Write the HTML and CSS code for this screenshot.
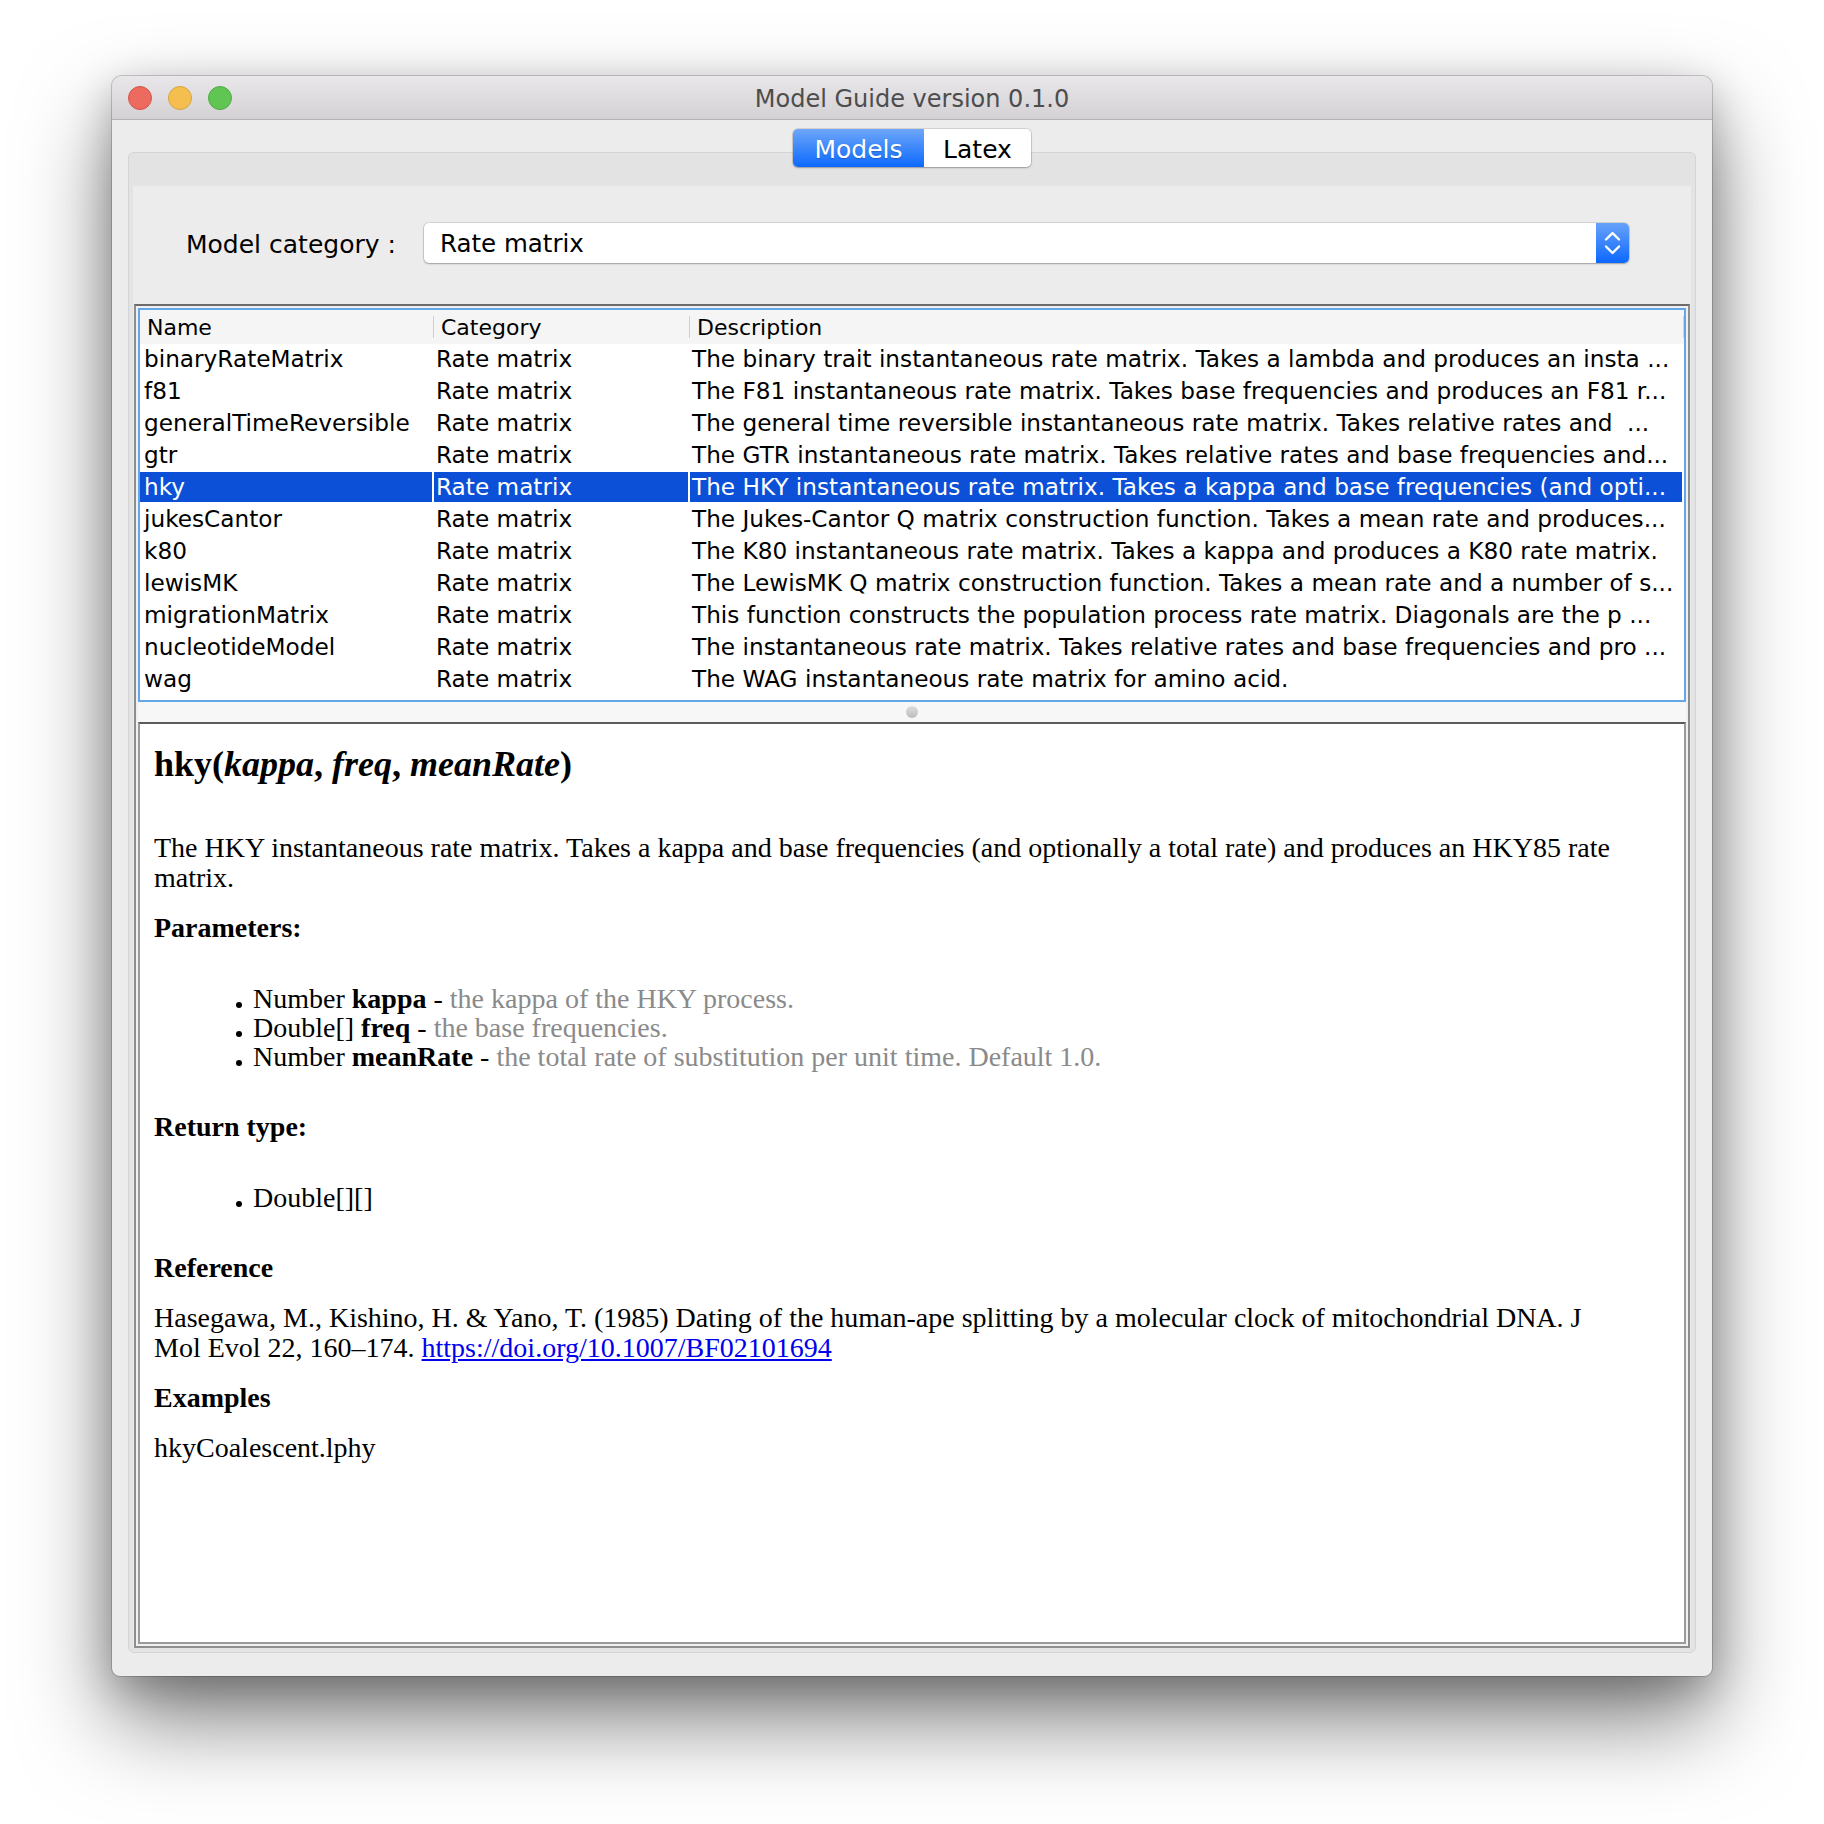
FILE: index.html
```html
<!DOCTYPE html>
<html lang="en">
<head>
    <meta charset="UTF-8">
    <title>Model Guide version 0.1.0</title>
    <link rel="stylesheet" href="styles.css">
</head>
<body>

    <div class="window">
        <div class="titlebar">
            <div class="lights">
                <span class="light red"></span>
                <span class="light yellow"></span>
                <span class="light green"></span>
            </div>
            <div class="title">Model Guide version 0.1.0</div>
        </div>

        <div class="window-body">
            <div class="tabs">
                <span class="tab active">Models</span>
                <span class="tab">Latex</span>
            </div>

            <div class="tab-panel">
                <div class="tab-content">
                    <div class="category-row">
                        <label class="category-label">Model category :</label>
                        <div class="combo">
                            <span class="combo-value">Rate matrix</span>
                            <span class="combo-arrows">
                                <svg width="33" height="40" viewBox="0 0 33 40">
                                    <path d="M10 16.5 L16.5 10 L23 16.5" fill="none" stroke="#fff" stroke-width="2.4" stroke-linecap="round" stroke-linejoin="round"/>
                                    <path d="M10 23.5 L16.5 30 L23 23.5" fill="none" stroke="#fff" stroke-width="2.4" stroke-linecap="round" stroke-linejoin="round"/>
                                </svg>
                            </span>
                        </div>
                    </div>

                    <div class="split">
                        <div class="table-scroll">
                            <table class="models">
                                <colgroup>
                                    <col class="col-name">
                                    <col class="col-category">
                                    <col>
                                </colgroup>
                                <thead>
                                    <tr><th>Name</th><th>Category</th><th>Description</th></tr>
                                </thead>
                                <tbody>
                                    <tr><td>binaryRateMatrix</td><td>Rate matrix</td><td>The binary trait instantaneous rate matrix. Takes a lambda and produces an insta ...</td></tr>
                                    <tr><td>f81</td><td>Rate matrix</td><td>The F81 instantaneous rate matrix. Takes base frequencies and produces an F81 r...</td></tr>
                                    <tr><td>generalTimeReversible</td><td>Rate matrix</td><td>The general time reversible instantaneous rate matrix. Takes relative rates and  ...</td></tr>
                                    <tr><td>gtr</td><td>Rate matrix</td><td>The GTR instantaneous rate matrix. Takes relative rates and base frequencies and...</td></tr>
                                    <tr class="selected"><td>hky</td><td>Rate matrix</td><td>The HKY instantaneous rate matrix. Takes a kappa and base frequencies (and opti...</td></tr>
                                    <tr><td>jukesCantor</td><td>Rate matrix</td><td>The Jukes-Cantor Q matrix construction function. Takes a mean rate and produces...</td></tr>
                                    <tr><td>k80</td><td>Rate matrix</td><td>The K80 instantaneous rate matrix. Takes a kappa and produces a K80 rate matrix.</td></tr>
                                    <tr><td>lewisMK</td><td>Rate matrix</td><td>The LewisMK Q matrix construction function. Takes a mean rate and a number of s...</td></tr>
                                    <tr><td>migrationMatrix</td><td>Rate matrix</td><td>This function constructs the population process rate matrix. Diagonals are the p ...</td></tr>
                                    <tr><td>nucleotideModel</td><td>Rate matrix</td><td>The instantaneous rate matrix. Takes relative rates and base frequencies and pro ...</td></tr>
                                    <tr><td>wag</td><td>Rate matrix</td><td>The WAG instantaneous rate matrix for amino acid.</td></tr>
                                </tbody>
                            </table>
                        </div>

                        <div class="divider"><span class="grip"></span></div>

                        <div class="doc-pane">
                            <h2 class="signature">hky(<i>kappa</i>, <i>freq</i>, <i>meanRate</i>)</h2>
                            <p>The HKY instantaneous rate matrix. Takes a kappa and base frequencies (and optionally a total rate) and produces an HKY85 rate<br>matrix.</p>

                            <h3>Parameters:</h3>
                            <ul>
                                <li>Number <b>kappa</b> - <span class="desc">the kappa of the HKY process.</span></li>
                                <li>Double[] <b>freq</b> - <span class="desc">the base frequencies.</span></li>
                                <li>Number <b>meanRate</b> - <span class="desc">the total rate of substitution per unit time. Default 1.0.</span></li>
                            </ul>

                            <h3>Return type:</h3>
                            <ul>
                                <li>Double[][]</li>
                            </ul>

                            <h3>Reference</h3>
                            <p>Hasegawa, M., Kishino, H. &amp; Yano, T. (1985) Dating of the human-ape splitting by a molecular clock of mitochondrial DNA. J<br>Mol Evol 22, 160–174. <a href="#">https://doi.org/10.1007/BF02101694</a></p>

                            <h3>Examples</h3>
                            <p>hkyCoalescent.lphy</p>
                        </div>
                    </div>
                </div>
            </div>
        </div>
    </div>

</body>
</html>
```

FILE: styles.css
```css
/* page + window frame */
body {
    margin: 0;
    min-height: 100vh;
    box-sizing: border-box;
    padding: 76px 112px 0;
    background-color: #ffffff;
    font-family: "DejaVu Sans", sans-serif;
    color: #000000;
}

.window {
    width: 1600px;
    height: 1600px;
    display: flex;
    flex-direction: column;
    background-color: #ececec;
    border-radius: 10px 10px 8px 8px;
    overflow: hidden;
    box-shadow: 0 0 0 1px rgba(0, 0, 0, 0.18), 0 12px 40px rgba(0, 0, 0, 0.22), 0 44px 90px rgba(0, 0, 0, 0.5);
}

.titlebar {
    height: 44px;
    box-sizing: border-box;
    padding: 0 16px;
    display: grid;
    grid-template-columns: 1fr auto 1fr;
    align-items: center;
    background: linear-gradient(#e9e7e9, #d3d1d3);
    border-bottom: 1px solid #b3b3b3;
}

.lights {
    display: flex;
    gap: 16px;
}

.light {
    width: 24px;
    height: 24px;
    box-sizing: border-box;
    border-radius: 50%;
}

.light.red { background-color: #ec6a5e; border: 1px solid #d2554b; }
.light.yellow { background-color: #f4bf4f; border: 1px solid #d8a341; }
.light.green { background-color: #61c554; border: 1px solid #4ead43; }

.title {
    font-size: 24px;
    color: #4d4d4d;
    padding-top: 2px;
}

/* tabs */
.window-body {
    flex: 1;
    padding: 9px 16px 23px;
    display: flex;
    flex-direction: column;
}

.tabs {
    position: relative;
    z-index: 1;
    align-self: center;
    display: flex;
    height: 38px;
    margin-bottom: -15px;
    border-radius: 5px;
    box-shadow: 0 0 0 1px rgba(0, 0, 0, 0.1), 0 1px 2px rgba(0, 0, 0, 0.25);
}

.tab {
    display: flex;
    align-items: center;
    justify-content: center;
    padding-top: 2px;
    box-sizing: border-box;
    font-size: 25px;
    width: 107px;
    background-color: #ffffff;
    border-radius: 0 5px 5px 0;
}

.tab.active {
    width: 131px;
    color: #ffffff;
    background: linear-gradient(#6ea6f8, #0c69ff);
    border-radius: 5px 0 0 5px;
    text-shadow: 0 1px 1px rgba(0, 0, 0, 0.2);
}

.tab-panel {
    flex: 1;
    display: flex;
    flex-direction: column;
    padding: 33px 4px 4px;
    background-color: #e3e3e3;
    border: 1px solid #d4d4d4;
    border-radius: 6px;
}

.tab-content {
    flex: 1;
    display: flex;
    flex-direction: column;
    padding: 0 1px;
    background-color: #ececec;
}

/* category chooser */
.category-row {
    display: flex;
    align-items: center;
    height: 40px;
    margin: 37px 61px 41px 52px;
}

.category-label {
    width: 238px;
    font-size: 25px;
    padding-top: 2px;
}

.combo {
    flex: 1;
    height: 40px;
    display: flex;
    background-color: #ffffff;
    border-radius: 5px;
    box-shadow: 0 0 0 1px rgba(0, 0, 0, 0.1), 0 1px 2px rgba(0, 0, 0, 0.25);
}

.combo-value {
    flex: 1;
    align-self: center;
    padding-left: 16px;
    font-size: 24.5px;
}

.combo-arrows {
    width: 33px;
    display: flex;
    background: linear-gradient(#67a2f9, #0c68ff);
    border-radius: 0 5px 5px 0;
}

/* split pane */
.split {
    flex: 1;
    display: flex;
    flex-direction: column;
    padding: 2px;
    background-color: #f0f0f0;
    border: 2px solid #8d8d8d;
    border-top-color: #6b6b6b;
}

.table-scroll {
    height: 394px;
    box-sizing: border-box;
    overflow: hidden;
    background-color: #ffffff;
    border: 2px solid #63a7ea;
}

.models {
    width: 100%;
    table-layout: fixed;
    border-collapse: separate;
    border-spacing: 0;
    font-size: 23.2px;
}

.col-name { width: 294px; }
.col-category { width: 256px; }

.models th {
    height: 34px;
    padding: 0 0 0 7px;
    text-align: left;
    font-size: 22px;
    font-weight: normal;
    background: linear-gradient(#d0d0d0, #d0d0d0) right center / 1px 22px no-repeat, #f5f5f5;
}

.models td {
    height: 30px;
    padding: 0 0 0 2px;
    line-height: 30px;
    white-space: pre;
    overflow: hidden;
    border-right: 2px solid #ffffff;
    border-bottom: 2px solid #ffffff;
}

.models td:first-child {
    padding-left: 4px;
}

.models tr.selected td {
    background-color: #0b50d6;
    color: #ffffff;
}

.divider {
    height: 20px;
    display: flex;
    align-items: center;
    justify-content: center;
    background-color: #f7f7f7;
}

.grip {
    width: 12px;
    height: 12px;
    border-radius: 50%;
    background: linear-gradient(#dedede, #bcbcbc);
}

/* html documentation pane */
.doc-pane {
    flex: 1;
    overflow: hidden;
    padding: 0 14px;
    background-color: #ffffff;
    border: 2px solid #9a9a9a;
    border-top-color: #5b5b5b;
    font-family: "Liberation Serif", serif;
    font-size: 28px;
    line-height: 30px;
}

.signature {
    margin: 19px 0 48px;
    font-size: 36px;
    line-height: 42px;
}

.doc-pane h3 {
    margin: 20px 0;
    font-size: 28px;
}

.doc-pane p {
    margin: 20px 0;
}

.doc-pane ul {
    margin: 41px 0;
    padding-left: 82px;
    list-style: none;
    line-height: 29px;
}

.doc-pane li::before {
    content: "";
    display: inline-block;
    width: 6px;
    height: 6px;
    margin-right: 11px;
    border-radius: 50%;
    background-color: #000000;
}

.desc {
    color: #8a8a8a;
}

.doc-pane a {
    color: #0000ee;
}
```
